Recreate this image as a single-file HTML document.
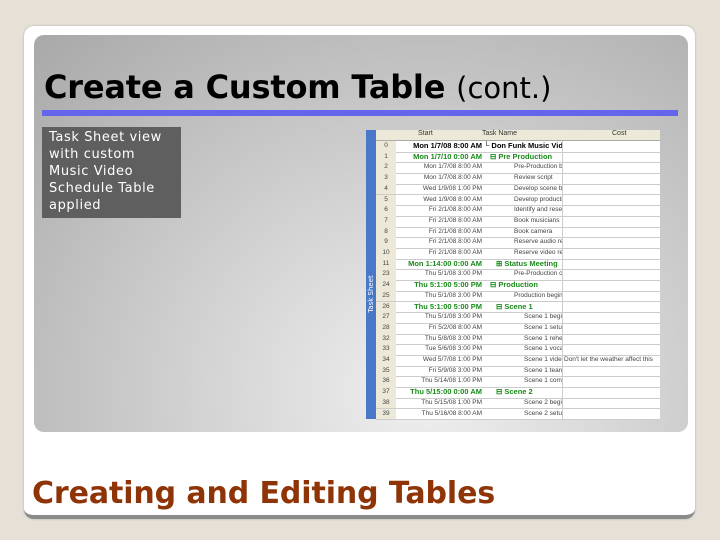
<!DOCTYPE html>
<html><head><meta charset="utf-8"><style>
body{margin:0;width:720px;height:540px;background:#e6e0d6;position:relative;overflow:hidden;font-family:"DejaVu Sans",sans-serif}
.card{position:absolute;left:24px;top:26px;width:671px;height:489px;background:#fff;border-radius:10px;border-bottom:4px solid #8a8a8a;box-shadow:0 0 2px #aaa}
.panel{position:absolute;left:34px;top:35px;width:654px;height:397px;border-radius:10px;background:radial-gradient(ellipse at 60% 90%,#f0f0f0 0%,#d0d0d0 45%,#a8a8a8 100%)}
.title{position:absolute;left:44px;top:68px;font-size:32px;font-weight:bold;color:#000;white-space:nowrap;letter-spacing:-0.2px}
.title span{font-weight:normal;font-size:29px;letter-spacing:0px}
.bar{position:absolute;left:42px;top:110px;width:636px;height:6px;background:#6464ec}
.cap{position:absolute;left:42px;top:127px;width:124px;height:89px;background:#5f5f5f;color:#fff;font-size:13px;line-height:17px;padding:2px 8px 0 7px;letter-spacing:.6px}
.tbl{position:absolute;left:366px;top:130px;width:294px;height:289px;background:#fff}
.side{position:absolute;left:0;top:0;width:10px;height:289px;background:#4a78c8}
.side span{position:absolute;left:-14px;top:160px;transform:rotate(-90deg);color:#fff;font-size:7px;white-space:nowrap}
.hdr{position:absolute;left:10px;top:0;width:284px;height:10px;background:#ece9d8;border-bottom:1px solid #aaa;font-size:7px;color:#333;font-family:"Liberation Sans",sans-serif}
.row{position:absolute;left:10px;width:284px;height:10.7px;border-bottom:1px solid #ccc;font-size:6.5px;color:#444;line-height:10px;white-space:nowrap;overflow:hidden;font-family:"Liberation Sans",sans-serif}
.n{position:absolute;left:0;width:20px;height:100%;background:#ece9d8;text-align:center}
.s{position:absolute;left:20px;width:86px;text-align:right}
.t{position:absolute;left:108px;width:78px;border-right:1px solid #ccc;height:100%;overflow:hidden}
.c{position:absolute;left:188px}
.g{color:#1a8a1a;font-weight:bold;font-size:7.5px}
.b{color:#000;font-weight:bold;font-size:7.5px}
.foot{position:absolute;left:32px;top:476px;font-size:30px;font-weight:bold;color:#8e3406;white-space:nowrap;letter-spacing:-0.1px}
</style></head><body>
<div class="card"></div>
<div class="panel"></div>
<div class="title">Create a Custom Table <span>(cont.)</span></div>
<div class="bar"></div>
<div class="cap">Task Sheet view with custom Music Video Schedule Table applied</div>
<div class="tbl">
<div class="side"><span>Task Sheet</span></div>
<div class="hdr"><span style="position:absolute;left:42px">Start</span><span style="position:absolute;left:106px">Task Name</span><span style="position:absolute;left:236px">Cost</span></div>
<div id="rows"></div>
</div>
<div class="foot">Creating and Editing Tables</div>
<script>
var d=[["0","Mon 1/7/08 8:00 AM","└ Don Funk Music Video","b",0],["1","Mon 1/7/10 0:00 AM","⊟ Pre Production","g",6],["2","Mon 1/7/08 8:00 AM","Pre-Production begins","",30],["3","Mon 1/7/08 8:00 AM","Review script","",30],["4","Wed 1/9/08 1:00 PM","Develop scene breakdown","",30],["5","Wed 1/9/08 8:00 AM","Develop production","",30],["6","Fri 2/1/08 8:00 AM","Identify and reserve locations","",30],["7","Fri 2/1/08 8:00 AM","Book musicians","",30],["8","Fri 2/1/08 8:00 AM","Book camera","",30],["9","Fri 2/1/08 8:00 AM","Reserve audio recorder","",30],["10","Fri 2/1/08 8:00 AM","Reserve video recorder","",30],["11","Mon 1:14:00 0:00 AM","⊞ Status Meeting","g",12],["23","Thu 5/1/08 3:00 PM","Pre-Production complete","",30],["24","Thu 5:1:00 5:00 PM","⊟ Production","g",6],["25","Thu 5/1/08 3:00 PM","Production begins","",30],["26","Thu 5:1:00 5:00 PM","⊟ Scene 1","g",12],["27","Thu 5/1/08 3:00 PM","Scene 1 begin","",40],["28","Fri 5/2/08 8:00 AM","Scene 1 setup","",40],["32","Thu 5/8/08 3:00 PM","Scene 1 rehearsal","",40],["33","Tue 5/6/08 3:00 PM","Scene 1 vocal rec","",40],["34","Wed 5/7/08 1:00 PM","Scene 1 video shoot","",40,"Don't let the weather affect this"],["35","Fri 5/9/08 3:00 PM","Scene 1 teardown","",40],["36","Thu 5/14/08 1:00 PM","Scene 1 complete","",40],["37","Thu 5/15:00 0:00 AM","⊟ Scene 2","g",12],["38","Thu 5/15/08 1:00 PM","Scene 2 begin","",40],["39","Thu 5/16/08 8:00 AM","Scene 2 setup","",40]];
var h="";d.forEach(function(r,i){var top=11+i*10.7;h+='<div class="row" style="top:'+top+'px"><div class="n">'+r[0]+'</div><div class="s '+r[3]+'">'+r[1]+'</div><div class="t '+r[3]+'"><span style="padding-left:'+r[4]+'px">'+r[2]+'</span></div><div class="c">'+(r[5]||"")+'</div></div>';});
document.getElementById("rows").innerHTML=h;
</script>
</body></html>
